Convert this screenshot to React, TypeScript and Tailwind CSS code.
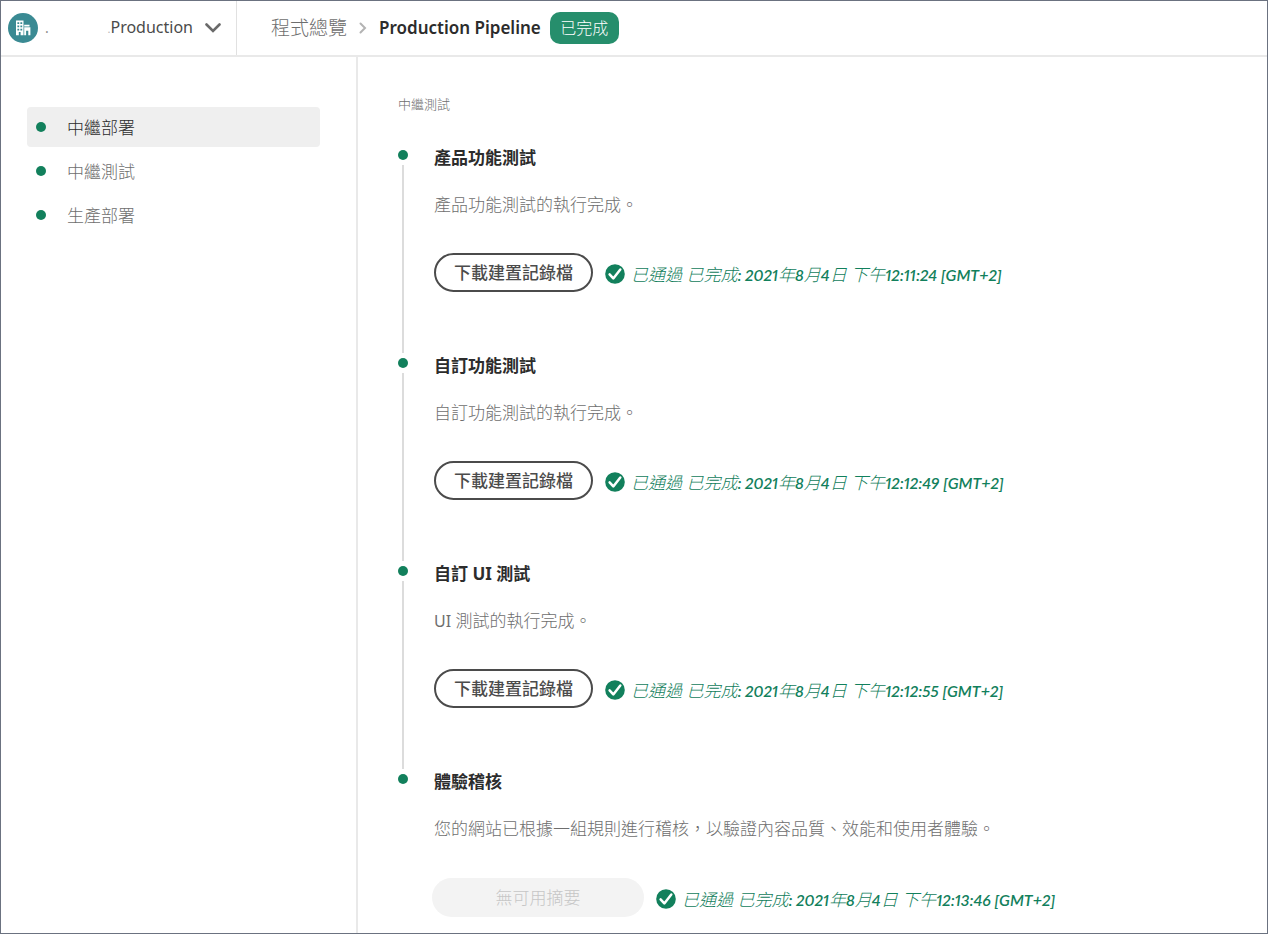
import React from 'react';

type Stage = {
  title: string;
  description: React.ReactNode;
  time: string;
  hasLog: boolean;
};

const steps = ['中繼部署', '中繼測試', '生產部署'];

const stages: Stage[] = [
  { title: '產品功能測試', description: '產品功能測試的執行完成。', time: '12:11:24', hasLog: true },
  { title: '自訂功能測試', description: '自訂功能測試的執行完成。', time: '12:12:49', hasLog: true },
  {
    title: '自訂 UI 測試',
    description: (
      <>
        <span className="text-[16px] font-normal">UI</span> 測試的執行完成。
      </>
    ),
    time: '12:12:55',
    hasLog: true,
  },
  {
    title: '體驗稽核',
    description: '您的網站已根據一組規則進行稽核，以驗證內容品質、效能和使用者體驗。',
    time: '12:13:46',
    hasLog: false,
  },
];

function ProgramLogo() {
  return (
    <svg className="h-[30px] w-[30px] shrink-0" viewBox="0 0 30 30" aria-hidden="true">
      <circle cx="15" cy="15" r="15" fill="#3a8a93" />
      <path
        fill="#fff"
        fillRule="evenodd"
        d="M8 7.5h7.5v14.8H8zM9.4 9.3v1.8h1.8V9.3zm3 0v1.8h1.8V9.3zm-3 3.2v1.8h1.8v-1.8zm3 0v1.8h1.8v-1.8zm-3 3.2v1.8h1.8v-1.8zm3 0v1.8h1.8v-1.8zm-1.6 3.4v3.2h1.8v-3.2z"
      />
      <path fill="#fff" d="M16.2 11.8h5.3v1.6h-5.3zM16.2 14.2h6.2v8.1h-2.1v-4.5h-2.2v4.5h-1.9z" />
    </svg>
  );
}

function PassedIcon() {
  return (
    <svg className="h-5 w-5 shrink-0" viewBox="0 0 20 20" aria-hidden="true">
      <circle cx="10" cy="10" r="9.8" fill="#12805c" />
      <path d="M4.6 10.4l3.7 4 7-8.9" fill="none" stroke="#fff" strokeWidth="2.5" strokeLinecap="round" strokeLinejoin="round" />
    </svg>
  );
}

function Latin({ children }: { children: React.ReactNode }) {
  return <span className="font-['Lato',sans-serif] text-[16px] font-semibold proportional-nums">{children}</span>;
}

function StageRow({ stage, last }: { stage: Stage; last: boolean }) {
  return (
    <li className="flex gap-[26px]">
      <div className="flex w-[10px] shrink-0 flex-col items-center gap-[5px] pb-[5px]">
        <span className="h-[10px] w-[10px] shrink-0 rounded-full bg-[#12805c]" />
        {!last && <span className="w-[2px] grow bg-[#dcdcdc]" />}
      </div>
      <div className={last ? 'min-w-0' : 'h-[208px] min-w-0'}>
        <h2 className="text-[17px] leading-4 font-bold text-[#2c2c2c]">{stage.title}</h2>
        <p className="mt-[29px] text-[17px] leading-5 font-light text-[#6e6e6e]">{stage.description}</p>
        <div className={last ? 'mt-[39px] flex items-center gap-3' : 'mt-[38px] flex items-center gap-3'}>
          {stage.hasLog ? (
            <button
              type="button"
              className="h-[39px] w-[159px] shrink-0 rounded-full border-2 border-[#4b4b4b] text-[17px] leading-5 font-medium text-[#4b4b4b]"
            >
              下載建置記錄檔
            </button>
          ) : (
            <button
              type="button"
              disabled
              className="-ml-[2px] h-[39px] w-[212px] shrink-0 rounded-full bg-[#f3f3f3] text-[17px] leading-5 font-light text-[#c6c6c6]"
            >
              無可用摘要
            </button>
          )}
          <div className="flex items-center gap-[6px] pt-[2px] text-[#12805c]">
            <PassedIcon />
            <p className="pt-[2px] text-[17px] leading-5 font-light whitespace-nowrap italic">
              已通過 已完成<Latin>: 2021</Latin>年<Latin>8</Latin>月<Latin>4</Latin>日 下午
              <Latin>{stage.time} [GMT+2]</Latin>
            </p>
          </div>
        </div>
      </div>
    </li>
  );
}

export default function App() {
  return (
    <div className="flex min-h-screen flex-col border border-[#6b7280] bg-white font-['Noto_Sans','Noto_Sans_CJK_TC',sans-serif]">
      <header className="flex h-14 shrink-0 border-b-2 border-[#e9e9e9]">
        <div className="flex w-[236px] shrink-0 items-center border-r border-[#e1e1e1] pl-[7px]">
          <ProgramLogo />
          <span className="ml-[7px] text-[14px] leading-5 text-[#8e8e8e]">.</span>
          <button type="button" className="ml-auto flex items-center gap-3 pr-[15px] text-[16px] leading-5 text-[#4b4b4b]">
            <span>
              <span className="text-[11px] text-[#b3b3b3]">.</span>
              Production
            </span>
            <svg className="h-[10px] w-4" viewBox="0 0 16 10" aria-hidden="true">
              <path d="M1.5 1.5L8 8l6.5-6.5" fill="none" stroke="#6a6a6a" strokeWidth="2.6" strokeLinecap="round" />
            </svg>
          </button>
        </div>
        <nav className="flex items-center pl-[34px]">
          <a href="#overview" className="text-[19px] leading-6 font-light text-[#6e6e6e]">
            程式總覽
          </a>
          <svg className="mx-3 h-3 w-2" viewBox="0 0 8 12" aria-hidden="true">
            <path d="M1.5 1.5L6 6l-4.5 4.5" fill="none" stroke="#b3b3b3" strokeWidth="2" strokeLinecap="round" />
          </svg>
          <h1 className="text-[17px] leading-6 font-semibold text-[#2c2c2c]">Production Pipeline</h1>
          <span className="ml-[9px] flex h-8 w-[69px] items-center justify-center rounded-[10px] bg-[#268e6c] text-[16px] leading-5 font-light text-white">
            已完成
          </span>
        </nav>
      </header>

      <div className="flex grow">
        <aside className="w-[357px] shrink-0 border-r-2 border-[#e9e9e9] pt-[50px] pr-9 pl-[26px]">
          <ul className="flex flex-col gap-1">
            {steps.map((step, index) => (
              <li key={step}>
                <a
                  href={`#step-${index}`}
                  className={
                    index === 0
                      ? 'flex h-10 items-center gap-[21px] rounded bg-[#efefef] pl-[9px] text-[17px] leading-5 font-light text-[#2c2c2c]'
                      : 'flex h-10 items-center gap-[21px] rounded pl-[9px] text-[17px] leading-5 font-light text-[#6e6e6e]'
                  }
                >
                  <span className="h-[10px] w-[10px] rounded-full bg-[#12805c]" />
                  <span className="pt-[2px]">{step}</span>
                </a>
              </li>
            ))}
          </ul>
        </aside>

        <main className="min-w-0 grow pt-[37px] pl-10">
          <p className="text-[13px] leading-5 font-light text-[#6e6e6e]">中繼測試</p>
          <ol className="mt-9">
            {stages.map((stage, index) => (
              <StageRow key={index} stage={stage} last={index === stages.length - 1} />
            ))}
          </ol>
        </main>
      </div>
    </div>
  );
}
